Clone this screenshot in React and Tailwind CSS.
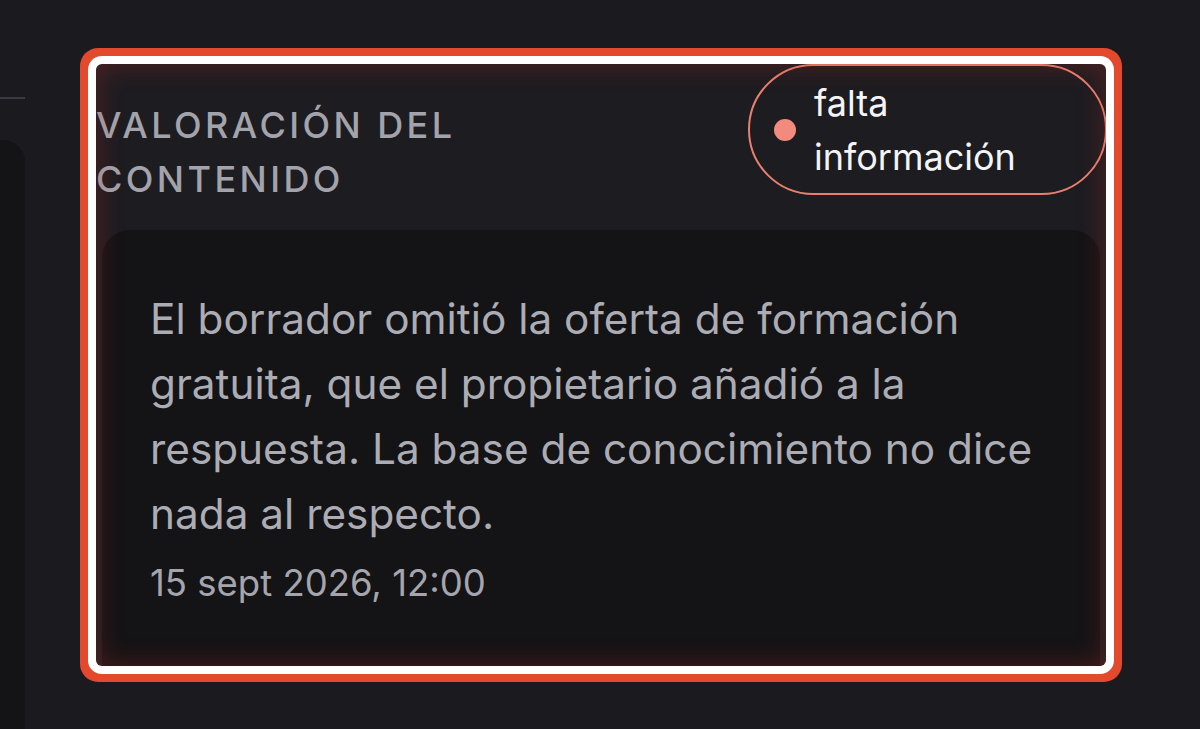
export default function App() {
  return (
    <div
      className="w-[1200px] h-[729px] overflow-hidden bg-[#1b1a1f] flex"
      style={{ fontFamily: "Inter, 'Noto Sans', sans-serif" }}
    >
      {/* columna izquierda (recortada) */}
      <div className="w-[25px] shrink-0 flex flex-col pt-[97px]">
        <div className="h-[2px] bg-[#3a3940]" />
        <div className="mt-[41px] flex-1 bg-[#141316] rounded-tr-[22px]" />
      </div>

      {/* tarjeta con foco */}
      <div className="ml-[71px] mt-[64px] w-[1010px] h-[602px] shrink-0 relative rounded-[6px] bg-[#1d1c21] overflow-hidden flex flex-col shadow-[0_0_0_8px_#ffffff,0_0_0_16px_#e2492d]">
        <div className="flex justify-between items-start">
          <h3 className="mt-[34px] w-[420px] text-[36px] leading-[54px] tracking-[0.095em] uppercase text-[#a3a3ab] font-medium">
            Valoración del contenido
          </h3>
          <span className="mt-0 -mr-px w-[359px] h-[131px] rounded-full border-2 border-[#e9806f] flex items-center pl-[24px] pr-[24px] gap-[18px]">
            <span className="w-[22px] h-[22px] rounded-full bg-[#f28b7d] shrink-0" />
            <span className="text-[36px] leading-[54px] text-[#f4f4f5]">falta información</span>
          </span>
        </div>

        <div className="mt-[24px] mx-[6px] -mb-[40px] flex-1 rounded-[28px] bg-[#141316] pl-[48px] pr-[26px] pt-[56px]">
          <p className="text-[42.3px] leading-[65px] text-[#acacb4]">
            El borrador omitió la oferta de formación gratuita, que el propietario añadió a la respuesta. La base de conocimiento no dice nada al respecto.
          </p>
          <p className="mt-[13px] text-[36.5px] leading-[48px] text-[#a5a5ad]">15 sept 2026, 12:00</p>
        </div>

        {/* brillo interior */}
        <div className="absolute inset-0 rounded-[6px] pointer-events-none shadow-[inset_0_0_28px_rgba(190,50,35,0.33)]" />
      </div>
    </div>
  );
}
